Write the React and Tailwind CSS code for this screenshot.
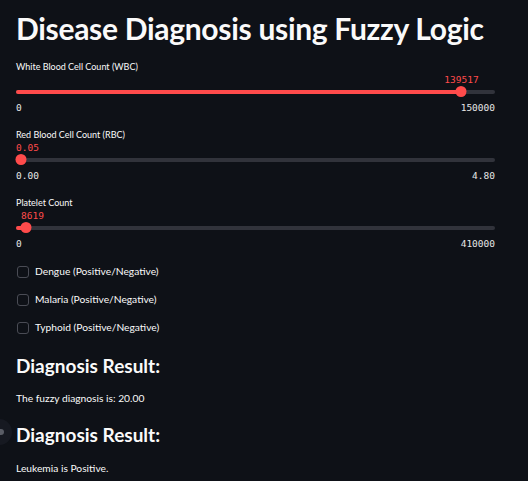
import React from "react";

const sans = { fontFamily: "Lato, 'Noto Sans', sans-serif" };

function Slider({ label, value, min, max, pct, valueStyle }) {
  return (
    <div className="flex flex-col">
      <div className="text-[9px] leading-[14px] text-[#fafafa]">{label}</div>
      <div className="relative h-[28px]">
        <div
          className="absolute top-0 font-['DejaVu_Sans_Mono',monospace] text-[9.5px] leading-[12px] text-[#ff4b4b]"
          style={valueStyle}
        >
          {value}
        </div>
        <div className="absolute left-0 right-0 top-[16px] h-[4px] rounded bg-[#31333b]" />
        <div
          className="absolute left-0 top-[16px] h-[4px] rounded bg-[#ff4b4b]"
          style={{ width: `${pct}%` }}
        />
        <div
          className="absolute top-[12px] h-[11px] w-[11px] -translate-x-1/2 rounded-full bg-[#ff4b4b]"
          style={{ left: `max(${pct}%, 5px)` }}
        />
      </div>
      <div className="flex justify-between font-['DejaVu_Sans_Mono',monospace] text-[9.5px] leading-[12px] text-[#e6e6e6]">
        <span>{min}</span>
        <span>{max}</span>
      </div>
    </div>
  );
}

function Check({ label }) {
  return (
    <div className="flex h-[28px] items-center gap-[6px]">
      <div className="ml-[1px] h-[12px] w-[12px] rounded-[3px] border border-[#4a4c55] bg-[#0e1117]" />
      <span className="text-[10.25px] text-[#fafafa]">{label}</span>
    </div>
  );
}

export default function App() {
  return (
    <div className="relative h-[481px] w-[528px] overflow-hidden bg-[#0e1117] text-[#fafafa]" style={sans}>
      <div className="absolute left-[-14px] top-[419px] h-[26px] w-[26px] rounded-full bg-[#161921]" />
      <div className="absolute left-[-2px] top-[429px] h-[6px] w-[6px] rounded-full bg-[#5a5d66]" />
      <div className="flex flex-col pl-[16px] pr-[33px] pt-[10px]">
        <h1 className="text-[30px] font-bold leading-[36px] tracking-[-0.3px]">
          Disease Diagnosis using Fuzzy Logic
        </h1>
        <div className="mt-[14px] flex flex-col gap-[14px]">
          <Slider
            label="White Blood Cell Count (WBC)"
            value="139517"
            min="0"
            max="150000"
            pct={93}
            valueStyle={{ left: "93%", transform: "translateX(-50%)" }}
          />
          <Slider
            label="Red Blood Cell Count (RBC)"
            value="0.05"
            min="0.00"
            max="4.80"
            pct={1}
            valueStyle={{ left: "0px" }}
          />
          <Slider
            label="Platelet Count"
            value="8619"
            min="0"
            max="410000"
            pct={2}
            valueStyle={{ left: "5px" }}
          />
        </div>
        <div className="mt-[8px] flex flex-col">
          <Check label="Dengue (Positive/Negative)" />
          <Check label="Malaria (Positive/Negative)" />
          <Check label="Typhoid (Positive/Negative)" />
        </div>
        <h2 className="mt-[11px] text-[19px] font-bold leading-[26px]">Diagnosis Result:</h2>
        <p className="mt-[12px] text-[10.25px] leading-[14px]">The fuzzy diagnosis is: 20.00</p>
        <h2 className="mt-[17px] text-[19px] font-bold leading-[26px]">Diagnosis Result:</h2>
        <p className="mt-[13px] text-[10.25px] leading-[14px]">Leukemia is Positive.</p>
      </div>
    </div>
  );
}
